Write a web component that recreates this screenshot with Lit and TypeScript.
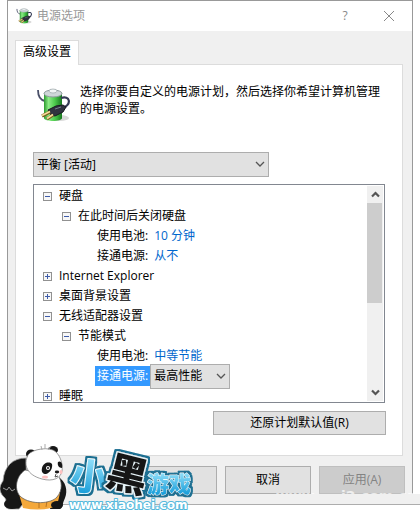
import { LitElement, html, svg, css, nothing } from "lit";
import { customElement } from "lit/decorators.js";
import { classMap } from "lit/directives/class-map.js";

interface Row {
  label: string;
  level: 0 | 1 | 2;
  open?: boolean;
  value?: string;
  editing?: boolean;
}

const ROWS: Row[] = [
  { label: "硬盘", level: 0, open: true },
  { label: "在此时间后关闭硬盘", level: 1, open: true },
  { label: "使用电池:", level: 2, value: "10 分钟" },
  { label: "接通电源:", level: 2, value: "从不" },
  { label: "Internet Explorer", level: 0, open: false },
  { label: "桌面背景设置", level: 0, open: false },
  { label: "无线适配器设置", level: 0, open: true },
  { label: "节能模式", level: 1, open: true },
  { label: "使用电池:", level: 2, value: "中等节能" },
  { label: "接通电源:", level: 2, value: "最高性能", editing: true },
  { label: "睡眠", level: 0, open: false },
];

@customElement("power-icon")
class PowerIcon extends LitElement {
  static styles = css`
    :host { display: block; }
    svg { display: block; width: 100%; height: 100%; }
  `;
  render() {
    return html`<svg viewBox="0 0 34 34" aria-hidden="true">
      <defs>
        <linearGradient id="green" x1="0" x2="1" y1="0" y2="0">
          <stop offset="0" stop-color="#2a9a2e" />
          <stop offset=".25" stop-color="#8ceb86" />
          <stop offset=".6" stop-color="#4ccb4c" />
          <stop offset="1" stop-color="#17781f" />
        </linearGradient>
      </defs>
      <ellipse cx="24" cy="30" rx="9" ry="3" fill="#d9d9d9" />
      <path d="M2 2C2 8 4 12 9 13" fill="none" stroke="#4a5068" stroke-width="1.800" />
      <path d="M8 5v25c0 4 18 4 18 0V5z" fill="url(#green)" />
      <ellipse cx="17" cy="5.500" rx="9" ry="3.500" fill="#cfd6d8" stroke="#8d9a9c" />
      <ellipse cx="17" cy="3" rx="4" ry="2" fill="#f2f5f5" stroke="#9aa5a8" stroke-width=".7" />
      <path d="M25 10C34 7 36 16 27 20" fill="none" stroke="#343a55" stroke-width="2.200" />
      <path d="M12 22L20 18l7-1 3 2-3 5-8 4-4-1z" fill="#30333f" stroke="#181a22" />
      <path d="M14 24l-8 4M17 27l-6 4" stroke="#7d5c1d" stroke-width="3.200" />
      <path d="M14 23.500l-8 4M17 26.500l-6 4" stroke="#f3dc9a" stroke-width="1.800" />
      <path d="M19 21l6-2" stroke="#767b8c" />
    </svg>`;
  }
}

@customElement("site-mark")
class SiteMark extends LitElement {
  static styles = css`
    :host { display: block; }
    svg { display: block; overflow: visible; }
    text { font-family: "Noto Sans CJK SC", sans-serif; font-weight: 900; paint-order: stroke; stroke-linejoin: round; }
    .url { font-family: "DejaVu Sans", sans-serif; font-weight: 700; font-size: 12px; }
  `;
  render() {
    return html`<svg width="192" height="68" viewBox="0 444 192 68" role="img" aria-label="小黑游戏">
      <defs>
        <linearGradient id="sky" x1="0" x2="0" y1="0" y2="1">
          <stop offset=".1" stop-color="#a5eaff" /><stop offset=".9" stop-color="#149bd8" />
        </linearGradient>
        <filter id="rim" x="-30%" y="-30%" width="160%" height="160%">
          <feMorphology in="SourceAlpha" operator="dilate" radius="2" result="fat" />
          <feFlood flood-color="#1d6f92" />
          <feComposite in2="fat" operator="in" result="edge" />
          <feMerge><feMergeNode in="edge" /><feMergeNode in="SourceGraphic" /></feMerge>
        </filter>
      </defs>
      <g>
        <path d="M26 458C13 458 4 466 3 481c-3 4-4 8-2 12 1 3 4 4 5 7-2 5-1 9 4 9h9l8-10z" fill="#171717" stroke="#aaa" stroke-width=".8" />
        <path d="M58 477c8 4 10 14 7 21-3 6-2 10-5 11H50z" fill="#171717" />
        <path d="M19 494l4 14q19 4 34-2l3-13z" fill="#f4a83b" />
        <path d="M39 500v8M47 501l-1 6" stroke="#b97422" fill="none" />
        <path d="M25 470C15 477 14 491 21 497c10 8 30 7 36 0 6-7 5-16 1-22z" fill="#fff" stroke="#555" stroke-width=".7" />
        <ellipse cx="12" cy="504" rx="8" ry="5" fill="#171717" />
        <ellipse cx="57" cy="505" rx="6" ry="4" fill="#171717" />
        <path d="M3 488l4 2 2-3 3 4 3-2" fill="none" stroke="#999" />
        <ellipse cx="31" cy="454" rx="5" ry="4.500" fill="#171717" />
        <ellipse cx="53" cy="450" rx="5" ry="4" fill="#171717" />
        <path d="M28 455c4-6 22-9 28-3 5 5 7 13 6 19-1 7-9 11-20 8-15-4-19-14-14-24z" fill="#fff" stroke="#777" stroke-width=".7" />
        <path d="M42 450l-1-4M45 449v-5M48 450l3-4" stroke="#aaa" fill="none" />
        <path d="M42 468c1-5 7-7 10-4 1 4-2 9-6 10-3 0-5-2-4-6zM58 462c3-2 5 2 4 6-3 0-5-3-4-6z" fill="#171717" />
        <circle cx="48" cy="468" r="2" fill="#fff" /><circle cx="48" cy="468" r="1" fill="#171717" />
        <ellipse cx="57" cy="472" rx="2.200" ry="1.400" fill="#171717" />
        <path d="M56 474l-1 3 3-1" fill="none" stroke="#555" />
        <ellipse cx="45" cy="477" rx="3" ry="1.600" fill="#ffc0c0" />
        <ellipse cx="61" cy="472" rx="1.500" ry="2" fill="#ffc0c0" />
      </g>
      <g filter="url(#rim)">
        <text transform="translate(69 488) rotate(7)" font-size="37" stroke="#e9fbff" stroke-width="2" fill="url(#sky)">小</text>
      </g>
      <g filter="url(#rim)">
        <text transform="translate(104 484) rotate(14)" font-size="41" stroke="#e6f3f7" stroke-width="3" fill="#151515">黑</text>
      </g>
      <g filter="url(#rim)">
        <text x="147" y="492" font-size="22" stroke="#e9fbff" stroke-width="1" fill="url(#sky)">游戏</text>
      </g>
      <text class="url" x="69" y="509" fill="#fff" stroke="#55b9dc" stroke-width="2">www.xiaohei.com</text>
    </svg>`;
  }
}

@customElement("app-root")
class AppRoot extends LitElement {
  static styles = css`
    :host {
      display: block;
      position: relative;
      background: #fff;
      color: #000;
      font: 12px/16px "Open Sans", "Noto Sans CJK SC", sans-serif;
    }
    * { box-sizing: border-box; }
    button, select { font: inherit; color: inherit; border-radius: 0; margin: 0; }
    .window { margin: 0 7px; border: 1px solid #999; border-bottom: 0; background: #f0f0f0; }
    .title { display: flex; align-items: center; height: 30px; padding: 0 12px 0 8px; background: #fff; color: #999; }
    .title power-icon { width: 16px; height: 16px; }
    .title h1 { flex: 1; margin: 0 0 0 5px; font: inherit; }
    .tool { border: 0; padding: 0; width: 22px; height: 24px; background: none; color: #888; }
    .tool + .tool { margin-left: 22px; }
    .tool svg { display: block; margin: auto; }
    .content { padding: 9px 9px 0 7px; }
    .tabs { display: flex; }
    .tab {
      position: relative; z-index: 1; height: 25px; margin-bottom: -1px; padding: 0 7px 2px;
      background: #fff; border: 1px solid #dcdcdc; border-bottom: 0;
    }
    .panel { height: 392px; padding: 18px 17px 0; background: #fff; border: 1px solid #dcdcdc; }
    .intro { display: flex; gap: 10px; height: 69px; }
    .intro power-icon { flex: none; width: 34px; height: 34px; margin: 5px 0 0 3px; }
    .intro p { margin: 0 -2px 0 0; line-height: 17px; }
    .drop { position: relative; display: block; width: 236px; max-width: 100%; }
    .drop select { appearance: none; width: 100%; height: 25px; padding: 0 24px 0 3px; background: #e1e1e1; border: 1px solid #adadad; }
    .drop svg { position: absolute; right: 4px; top: 9px; pointer-events: none; }
    .tree { display: flex; height: 219px; margin-top: 7px; padding: 1px; border: 1px solid #828790; overflow: hidden; }
    .tree ul { flex: 1; height: 215px; margin: 0; padding: 0 0 0 8px; list-style: none; overflow: hidden; }
    .row { display: flex; align-items: center; height: 20px; }
    .l1 { padding-left: 19px; }
    .l2 { padding-left: 52px; }
    .toggle { width: 9px; height: 9px; margin-right: 5px; padding: 0; border: 1px solid #919191; background: #f7f7f7; }
    .toggle svg { display: block; }
    .name { height: 20px; padding: 2px; white-space: nowrap; }
    .name.on { background: #3399ff; color: #fff; }
    .row a { margin-left: 4px; color: #0066cc; text-decoration: none; }
    .row .drop { width: 80px; margin-right: auto; }
    .bar { display: flex; flex-direction: column; width: 16px; background: #f0f0f0; }
    .bar button { height: 17px; padding: 0; border: 0; background: none; }
    .bar button svg { display: block; margin: auto; }
    .thumb { width: 15px; height: 100px; background: #cdcdcd; }
    .bar button:last-child { margin-top: auto; }
    .push { border: 1px solid #adadad; background: #e1e1e1; padding: 0; }
    .push:disabled { background: #ccc; border-color: #bfbfbf; color: #838383; }
    .restore { display: block; width: 173px; height: 24px; margin: 8px -1px 0 auto; }
    .actions { display: flex; justify-content: flex-end; gap: 8px; margin-right: -2px; padding-top: 10px; }
    .actions .push { width: 86px; height: 28px; }
    .base { height: 11px; margin-left: 7px; background: #f0f0f0; border-left: 1px solid #999; border-bottom: 1px solid #adadad; }
    .end { height: 7px; }
    site-mark { position: absolute; left: 0; bottom: 0; }
    .stamp { position: absolute; right: 3px; bottom: 18px; display: flex; gap: 22px; height: 5px; overflow: hidden; color: #ffffffb0; font: bold 14px/14px "DejaVu Sans", sans-serif; }
  `;

  private chevron() {
    return html`<svg width="10" height="6" viewBox="0 0 10 6" aria-hidden="true"><path d="M1 1l4 4 4-4" fill="none" stroke="#555" stroke-width="1.300" /></svg>`;
  }

  private row(r: Row) {
    return html`<li class=${classMap({ row: true, l1: r.level === 1, l2: r.level === 2 })}>
      ${r.open === undefined ? nothing : html`<button class="toggle" aria-label=${r.label} aria-expanded=${r.open ? "true" : "false"}>
        <svg width="7" height="7" viewBox="0 0 7 7"><path d=${r.open ? "M1 3.5h5" : "M1 3.5h5M3.5 1v5"} stroke="#3e5ba9" /></svg>
      </button>`}
      ${r.editing
        ? html`<label class="name on" for="plugged">${r.label}</label>
            <span class="drop"><select id="plugged"><option>${r.value}</option></select>${this.chevron()}</span>`
        : html`<span class="name">${r.label}</span>${r.value ? html`<a href="#">${r.value}</a>` : nothing}`}
    </li>`;
  }

  render() {
    return html`
      <main class="window">
        <header class="title">
          <power-icon></power-icon>
          <h1>电源选项</h1>
          <button class="tool" aria-label="帮助">?</button>
          <button class="tool" aria-label="关闭">
            <svg width="12" height="12" viewBox="0 0 12 12"><path d="M1 1l10 10M11 1L1 11" stroke="#888" /></svg>
          </button>
        </header>
        <div class="content">
          <div class="tabs" role="tablist"><button class="tab" role="tab" aria-selected="true">高级设置</button></div>
          <section class="panel">
            <div class="intro">
              <power-icon></power-icon>
              <p>选择你要自定义的电源计划，然后选择你希望计算机管理的电源设置。</p>
            </div>
            <span class="drop"><select aria-label="电源计划"><option>平衡 [活动]</option></select>${this.chevron()}</span>
            <div class="tree">
              <ul>${ROWS.map((r) => this.row(r))}</ul>
              <div class="bar">
                <button aria-label="向上"><svg width="9" height="7" viewBox="0 0 9 7"><path d="M1 5.500L4.500 2 8 5.500" fill="none" stroke="#555" stroke-width="2.200" /></svg></button>
                <div class="thumb"></div>
                <button aria-label="向下"><svg width="9" height="7" viewBox="0 0 9 7"><path d="M1 1.500L4.500 5 8 1.500" fill="none" stroke="#555" stroke-width="2.200" /></svg></button>
              </div>
            </div>
            <button class="push restore">还原计划默认值(R)</button>
          </section>
          <div class="actions">
            <button class="push" aria-label="确定"></button>
            <button class="push">取消</button>
            <button class="push" disabled>应用(A)</button>
          </div>
        </div>
      </main>
      <div class="base"></div>
      <div class="end"></div>
      <div class="stamp" aria-hidden="true"><span>www.</span><span>j2.com.cn</span></div>
      <site-mark></site-mark>
    `;
  }
}
